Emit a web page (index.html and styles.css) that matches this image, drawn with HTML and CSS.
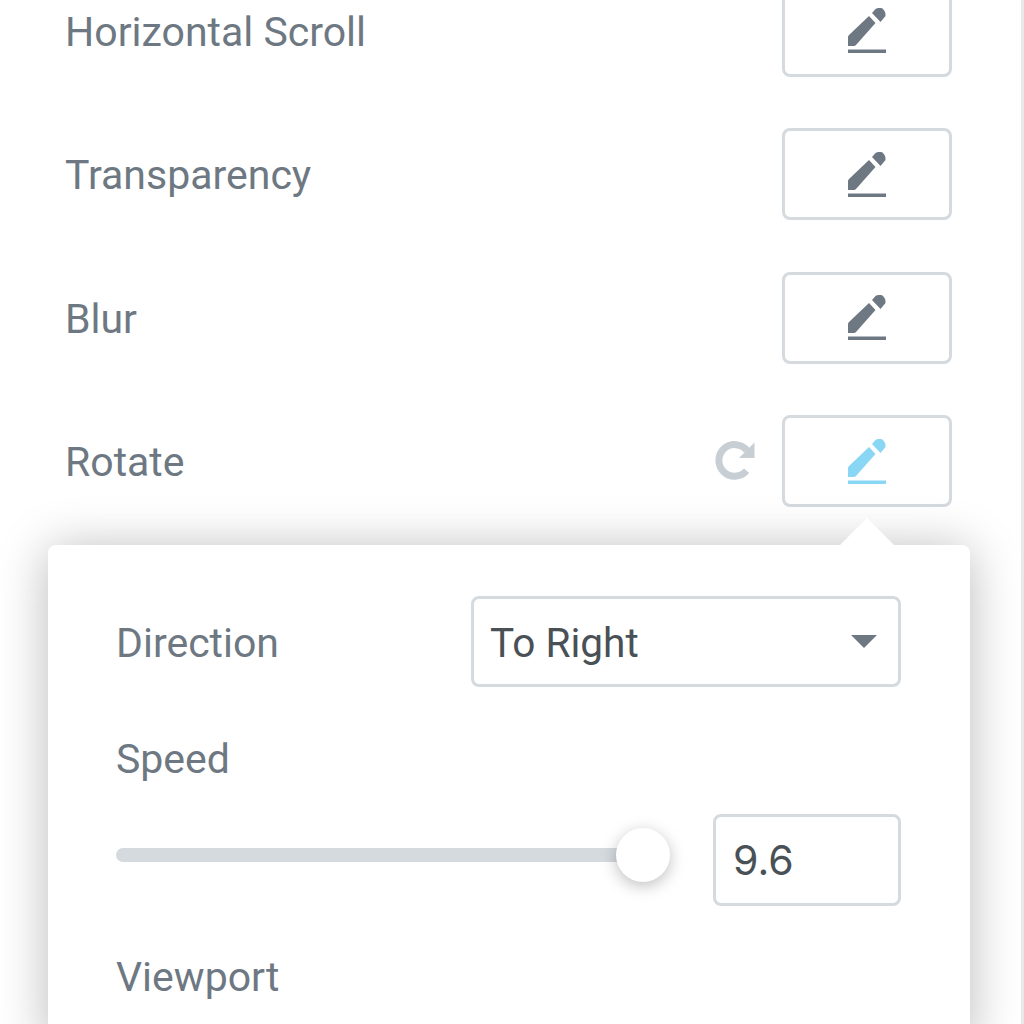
FILE: index.html
```html
<!DOCTYPE html>
<html lang="en">
<head>
    <meta charset="UTF-8">
    <meta name="viewport" content="width=device-width, initial-scale=1.0">
    <title>Scrolling Effects</title>
    <link rel="stylesheet" href="styles.css">
</head>
<body>
    <svg class="icon-defs" width="0" height="0">
        <symbol id="pencil" viewBox="0 0 38 45">
            <path d="M0 38 L0 29 Q0 28 1 27 L21 8 L27.5 15 L8 37 Q7 38 6 38 Z"/>
            <path d="M24 5 L27.5 1 Q29 0 30.5 0 L33 0 Q34 0 35 1 L36.5 3 Q38 5 37.5 8 L32.5 14 Z"/>
            <rect x="0" y="41.5" width="38" height="3.5"/>
        </symbol>
    </svg>
    <div class="panel">
        <div class="control">
            <span class="control-label">Horizontal Scroll</span>
            <button class="edit-btn"><svg class="pencil"><use href="#pencil"/></svg></button>
        </div>
        <div class="control">
            <span class="control-label">Transparency</span>
            <button class="edit-btn"><svg class="pencil"><use href="#pencil"/></svg></button>
        </div>
        <div class="control">
            <span class="control-label">Blur</span>
            <button class="edit-btn"><svg class="pencil"><use href="#pencil"/></svg></button>
        </div>
        <div class="control">
            <span class="control-label">Rotate</span>
            <svg class="reset" viewBox="0 0 40 39">
                <path d="M31.6 29.8 A15.8 15.8 0 1 1 32 9.5" fill="none" stroke="#c7ced4" stroke-width="7"/>
                <path d="M39.5 1.5 V17 H24 Z" fill="#c7ced4"/>
            </svg>
            <button class="edit-btn active"><svg class="pencil"><use href="#pencil"/></svg></button>
        </div>

        <div class="popup">
            <div class="popup-row">
                <span class="popup-label">Direction</span>
                <div class="select">To Right<span class="caret"></span></div>
            </div>
            <div class="popup-label speed-label">Speed</div>
            <div class="slider-row">
                <div class="slider"><span class="thumb"></span></div>
                <div class="number-input">9.6</div>
            </div>
            <div class="popup-label viewport-label">Viewport</div>
        </div>
    </div>
</body>
</html>
```
FILE: styles.css
```css
html, body {
    margin: 0;
    height: 1024px;
    overflow: hidden;
    background-color: white;
}
body {
    font-family: Roboto, "Liberation Sans", sans-serif;
    color: #6d7882;
}
.icon-defs {
    display: block;
}
.panel {
    box-sizing: border-box;
    width: 1024px;
    height: 1060px;
    margin-top: -15.5px;
    padding: 0 69px 0 65px;
    border-right: 3px solid #e9e9eb;
    display: flex;
    flex-direction: column;
    gap: 51.5px;
}
.control {
    display: flex;
    align-items: center;
    height: 92px;
    flex: none;
}
.control-label {
    font-size: 41px;
    line-height: 44px;
    padding-top: 2px;
    flex: 1;
}
.edit-btn {
    box-sizing: border-box;
    width: 170px;
    height: 92px;
    background-color: white;
    border: 3px solid #d5dadf;
    border-radius: 8px;
    display: flex;
    align-items: center;
    justify-content: center;
    padding: 0;
}
.pencil {
    width: 38px;
    height: 45px;
    fill: #6d7882;
}
.edit-btn.active .pencil {
    fill: #8ad6f5;
}
.reset {
    width: 40px;
    height: 39px;
    margin: -2px 27px 0 0;
}
.popup {
    box-sizing: border-box;
    position: relative;
    margin: -13.5px 0 0 -17px;
    width: 922px;
    flex: 1;
    padding: 51px 69px 0 68px;
    background-color: white;
    border-radius: 8px;
    box-shadow: 0 4px 50px rgba(0,0,0,0.28);
}
/* arrow above the rotate button */
.popup::before {
    content: "";
    position: absolute;
    top: -27px;
    left: 792px;
    border-left: 27px solid transparent;
    border-right: 27px solid transparent;
    border-bottom: 27px solid white;
}
.popup-row {
    display: flex;
    align-items: center;
    justify-content: space-between;
}
.popup-label {
    font-size: 41px;
    line-height: 44px;
}
.popup-row .popup-label {
    padding-top: 3px;
}
.select {
    box-sizing: border-box;
    width: 430px;
    height: 91px;
    border: 3px solid #d5dadf;
    border-radius: 8px;
    padding: 3px 21px 0 16px;
    font-size: 40.6px;
    color: #495157;
    display: flex;
    align-items: center;
    justify-content: space-between;
}
.caret {
    border-left: 13px solid transparent;
    border-right: 13px solid transparent;
    border-top: 13px solid #6d7882;
    margin-top: -3px;
}
.speed-label {
    margin-top: 50px;
}
.slider-row {
    display: flex;
    align-items: center;
    justify-content: space-between;
    margin-top: 33px;
}
.slider {
    position: relative;
    width: 527px;
    height: 14px;
    margin-bottom: 10px;
    background-color: #d5dadf;
    border-radius: 7px;
}
.thumb {
    position: absolute;
    top: -20px;
    right: -27px;
    width: 54px;
    height: 54px;
    background-color: white;
    border-radius: 50%;
    box-shadow: 0 4px 16px rgba(0,0,0,0.25);
}
.number-input {
    box-sizing: border-box;
    width: 188px;
    height: 92px;
    border: 3px solid #d5dadf;
    border-radius: 8px;
    padding-left: 17px;
    font-family: Inter, Roboto, sans-serif;
    font-size: 41px;
    color: #495157;
    display: flex;
    align-items: center;
}
.viewport-label {
    margin-top: 49px;
}
```
